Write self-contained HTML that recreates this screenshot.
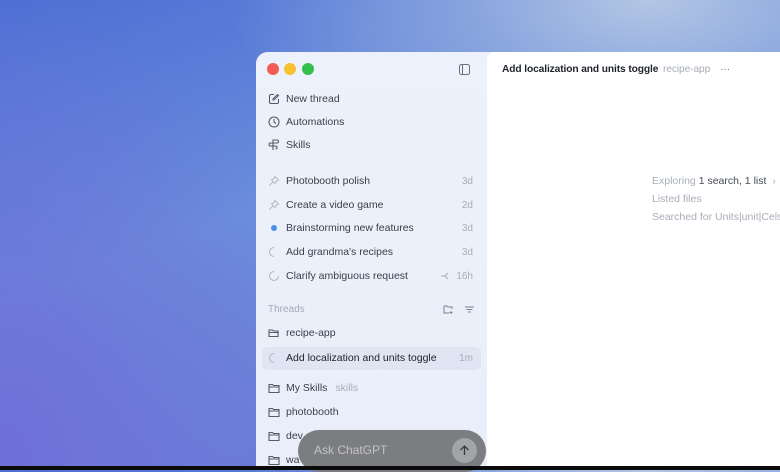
<!DOCTYPE html>
<html><head><style>
*{margin:0;padding:0;box-sizing:border-box}
body{width:780px;height:470px;overflow:hidden;position:relative;font-family:"Liberation Sans",sans-serif;
background:
radial-gradient(ellipse 420px 200px at 650px 0px,#b3c6e4 0%,rgba(160,185,225,.6) 45%,rgba(120,150,220,0) 100%),
radial-gradient(ellipse 300px 500px at 0px 470px,#6f6fd8 0%,rgba(111,111,216,0) 100%),
linear-gradient(160deg,#4d6fd4 0%,#6b8ddc 40%,#6b7ed8 70%,#6a6ad2 100%);}
.win{position:absolute;left:256px;top:52px;width:540px;height:414px;border-radius:12px 0 0 0;background:#eef2fb;overflow:hidden}
.side{position:absolute;left:0;top:0;width:231px;height:414px;background:linear-gradient(180deg,#edf1fb,#e9eefa)}
.main{position:absolute;left:231px;top:0;right:0;height:414px;background:#fff;border-radius:8px 0 0 0}
.dot{position:absolute;top:11px;width:12px;height:12px;border-radius:50%}
.it{position:absolute;left:12px;width:212px;height:22px;font-size:10.5px;color:#3a3f4a;display:flex;align-items:center}
.it svg{width:12px;height:12px;margin-right:6px;flex:none}
.it .t{position:absolute;right:7px;color:#a8adb8;font-size:10px}
</style></head><body>
<div class="win">
 <div class="side">
  <div class="dot" style="left:11px;background:#f25c55"></div>
  <div class="dot" style="left:28px;background:#f7c12d"></div>
  <div class="dot" style="left:46px;background:#34c04a"></div>
  <svg style="position:absolute;left:203px;top:12px" width="11" height="11" viewBox="0 0 11 11"><rect x=".5" y=".5" width="10" height="10" rx="2" fill="none" stroke="#6a707c"/><line x1="3.5" y1="1" x2="3.5" y2="10" stroke="#6a707c"/></svg>

  <div class="it" style="top:36px"><svg viewBox="0 0 12 12" fill="none" stroke="#555b66" stroke-width="1.1"><path d="M6 1.5H3a1.5 1.5 0 0 0-1.5 1.5v6A1.5 1.5 0 0 0 3 10.5h6A1.5 1.5 0 0 0 10.5 9V6"/><path d="M9.5 1.5l1 1L6 7H5V6z"/></svg>New thread</div>
  <div class="it" style="top:59px"><svg viewBox="0 0 12 12" fill="none" stroke="#555b66" stroke-width="1.1"><circle cx="6" cy="6" r="5"/><path d="M6 3v3l2 1.5"/></svg>Automations</div>
  <div class="it" style="top:82px"><svg viewBox="0 0 12 12" fill="none" stroke="#555b66" stroke-width="1.1"><path d="M5 1h4a1.5 1.5 0 0 1 0 3H5zM5 4H2.5a1.5 1.5 0 0 0 0 3H5zM5 1v10M5 7h2.5a1.5 1.5 0 0 1 0 3"/></svg>Skills</div>

  <div class="it" style="top:118px"><svg viewBox="0 0 12 12" fill="none" stroke="#b5bac4" stroke-width="1"><path d="M7 1.5l3.5 3.5-2 1-1.5 2.5L3.5 5 6 3.5zM5 7l-3.5 3.5"/></svg>Photobooth polish<span class="t">3d</span></div>
  <div class="it" style="top:142px"><svg viewBox="0 0 12 12" fill="none" stroke="#b5bac4" stroke-width="1"><path d="M7 1.5l3.5 3.5-2 1-1.5 2.5L3.5 5 6 3.5zM5 7l-3.5 3.5"/></svg>Create a video game<span class="t">2d</span></div>
  <div class="it" style="top:165px"><svg viewBox="0 0 12 12"><circle cx="6" cy="6" r="3" fill="#4a90e8"/></svg>Brainstorming new features<span class="t">3d</span></div>
  <div class="it" style="top:189px"><svg viewBox="0 0 12 12" fill="none" stroke="#b5bac4" stroke-width="1.1"><path d="M6 1.5A4.5 4.5 0 0 0 6 10.5"/></svg>Add grandma's recipes<span class="t">3d</span></div>
  <div class="it" style="top:213px"><svg viewBox="0 0 12 12" fill="none" stroke="#b5bac4" stroke-width="1.1"><path d="M6 1.5A4.5 4.5 0 1 0 10.5 6"/></svg>Clarify ambiguous request<span class="t">16h</span><svg style="position:absolute;right:30px;margin:0;width:10px;height:10px" viewBox="0 0 10 10" fill="none" stroke="#a8adb8"><path d="M1 5h4l3-3M5 5l3 3"/></svg></div>

  <div style="position:absolute;left:12px;top:252px;font-size:10px;color:#a3a9b5">Threads</div>
  <svg style="position:absolute;left:187px;top:252px" width="11" height="11" viewBox="0 0 11 11" fill="none" stroke="#7a808c"><path d="M1 2h3l1 1h4v2M1 2v7h5M8 7v3M6.5 8.5h3"/></svg>
  <svg style="position:absolute;left:208px;top:252px" width="11" height="11" viewBox="0 0 11 11" stroke="#7a808c"><path d="M1 3h9M2.5 5.5h6M4 8h3"/></svg>

  <div class="it" style="top:270px"><svg viewBox="0 0 12 12" fill="none" stroke="#555b66" stroke-width="1.1"><path d="M1 3h3.5l1 1H10v5.5H1zM1 5.5h10"/></svg>recipe-app</div>
  <div style="position:absolute;left:6px;top:295px;width:219px;height:23px;border-radius:6px;background:#dfe5f2"></div>
  <div class="it" style="top:295px;color:#20242c"><svg viewBox="0 0 12 12" fill="none" stroke="#b5bac4" stroke-width="1.1"><path d="M6 1.5A4.5 4.5 0 0 0 6 10.5"/></svg>Add localization and units toggle<span class="t">1m</span></div>
  <div class="it" style="top:325px"><svg viewBox="0 0 12 12" fill="none" stroke="#555b66" stroke-width="1.1"><path d="M1 2.5h3.5l1 1H11v7H1zM1 5h10"/></svg>My Skills<span style="color:#a8adb8;margin-left:8px">skills</span></div>
  <div class="it" style="top:349px"><svg viewBox="0 0 12 12" fill="none" stroke="#555b66" stroke-width="1.1"><path d="M1 2.5h3.5l1 1H11v7H1zM1 5h10"/></svg>photobooth</div>
  <div class="it" style="top:373px"><svg viewBox="0 0 12 12" fill="none" stroke="#555b66" stroke-width="1.1"><path d="M1 2.5h3.5l1 1H11v7H1zM1 5h10"/></svg>dev</div>
  <div class="it" style="top:397px"><svg viewBox="0 0 12 12" fill="none" stroke="#555b66" stroke-width="1.1"><path d="M1 2.5h3.5l1 1H11v7H1zM1 5h10"/></svg>wa</div>
 </div>
 <div class="main">
  <div style="position:absolute;left:15px;top:12px;font-size:10.2px;color:#1f232a;font-weight:bold;white-space:nowrap;letter-spacing:-0.1px">Add localization and units toggle <span style="font-weight:normal;color:#a8adb8;margin-left:2px">recipe-app</span><span style="font-weight:normal;color:#777;margin-left:10px">···</span></div>
  <div style="position:absolute;left:165px;top:123px;font-size:10.5px;color:#a8adb8;white-space:nowrap">Exploring <span style="color:#444a55">1 search, 1 list</span> &nbsp;›</div>
  <div style="position:absolute;left:165px;top:141px;font-size:10.5px;color:#a8adb8">Listed files</div>
  <div style="position:absolute;left:165px;top:159px;font-size:10.5px;color:#a8adb8;white-space:nowrap">Searched for Units|unit|Celsius</div>
 </div>
</div>
<div style="position:absolute;left:298px;top:430px;width:188px;height:42px;border-radius:21px;background:#7c7d80"></div>
<div style="position:absolute;left:314px;top:443px;font-size:12px;color:#c2c3c6">Ask ChatGPT</div>
<div style="position:absolute;left:452px;top:438px;width:25px;height:25px;border-radius:50%;background:#a3a4a7"></div>
<svg style="position:absolute;left:458px;top:444px" width="13" height="13" viewBox="0 0 13 13" fill="none" stroke="#3a3b3e" stroke-width="1.3"><path d="M6.5 11V2M2.5 6l4-4 4 4"/></svg>
<div style="position:absolute;left:0;top:466px;width:780px;height:4px;background:#0b0b0c"></div>
</body></html>
